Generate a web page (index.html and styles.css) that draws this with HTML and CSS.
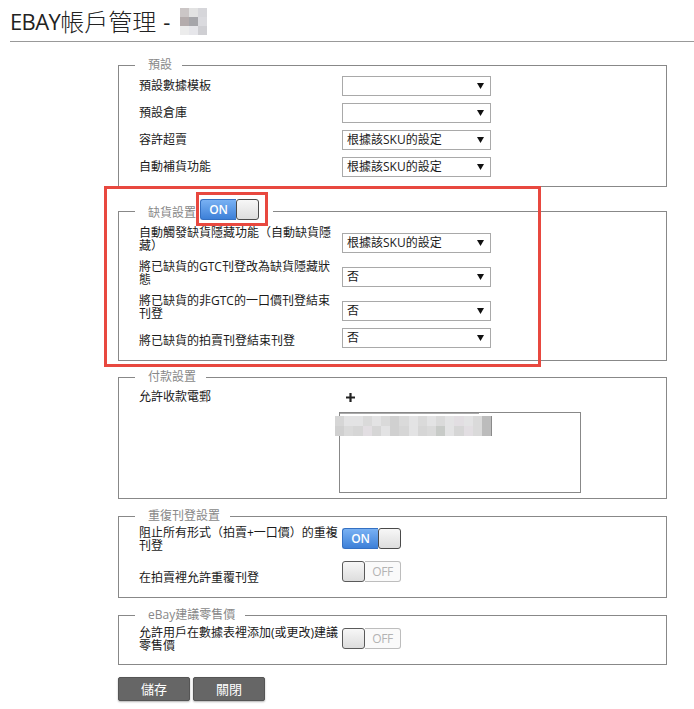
FILE: index.html
```html
<!DOCTYPE html>
<html lang="zh-Hant">
<head>
<meta charset="utf-8">
<title>EBAY帳戶管理</title>
<link rel="stylesheet" href="styles.css">
</head>
<body>
<div class="page">
  <h1 class="title"><span class="t-en">EBAY</span><span class="t-zh">帳戶管理</span><span class="t-dash">-</span><span class="blur-sq"><i class="b1"></i><i class="b2"></i><i class="b3"></i><i class="b4"></i><i class="b5"></i><i class="b6"></i><i class="b7"></i><i class="b8"></i><i class="b9"></i></span></h1>

  <div class="form">
    <fieldset class="fs fs1">
      <legend>預設</legend>
      <div class="rows">
        <div class="row"><span class="label">預設數據模板</span><div class="select"><span class="val"></span><svg class="arrow" width="7" height="6" viewBox="0 0 7 6"><path d="M0 0H7L3.5 6Z"/></svg></div></div>
        <div class="row"><span class="label">預設倉庫</span><div class="select"><span class="val"></span><svg class="arrow" width="7" height="6" viewBox="0 0 7 6"><path d="M0 0H7L3.5 6Z"/></svg></div></div>
        <div class="row"><span class="label">容許超賣</span><div class="select"><span class="val">根據該SKU的設定</span><svg class="arrow" width="7" height="6" viewBox="0 0 7 6"><path d="M0 0H7L3.5 6Z"/></svg></div></div>
        <div class="row"><span class="label">自動補貨功能</span><div class="select"><span class="val">根據該SKU的設定</span><svg class="arrow" width="7" height="6" viewBox="0 0 7 6"><path d="M0 0H7L3.5 6Z"/></svg></div></div>
      </div>
    </fieldset>

    <fieldset class="fs fs2">
      <legend><span class="lg-flex"><span class="lg-text">缺貨設置</span><span class="hl-wrap"><span class="toggle on"><span class="on-part">ON</span><span class="knob"></span></span><span class="hl"></span></span></span></legend>
      <div class="rows">
        <div class="row"><span class="label">自動觸發缺貨隱藏功能（自動缺貨隱藏）</span><div class="select"><span class="val">根據該SKU的設定</span><svg class="arrow" width="7" height="6" viewBox="0 0 7 6"><path d="M0 0H7L3.5 6Z"/></svg></div></div>
        <div class="row"><span class="label">將已缺貨的GTC刊登改為缺貨隱藏狀態</span><div class="select"><span class="val">否</span><svg class="arrow" width="7" height="6" viewBox="0 0 7 6"><path d="M0 0H7L3.5 6Z"/></svg></div></div>
        <div class="row"><span class="label">將已缺貨的非GTC的一口價刊登結束刊登</span><div class="select"><span class="val">否</span><svg class="arrow" width="7" height="6" viewBox="0 0 7 6"><path d="M0 0H7L3.5 6Z"/></svg></div></div>
        <div class="row"><span class="label">將已缺貨的拍賣刊登結束刊登</span><div class="select"><span class="val">否</span><svg class="arrow" width="7" height="6" viewBox="0 0 7 6"><path d="M0 0H7L3.5 6Z"/></svg></div></div>
      </div>
    </fieldset>

    <fieldset class="fs fs3">
      <legend>付款設置</legend>
      <div class="pay">
        <span class="label">允許收款電郵</span>
        <div class="pay-right">
          <div class="plus"><svg width="9" height="9" viewBox="0 0 9 9"><path d="M4.5 0V9M0 4.5H9" stroke="#222" stroke-width="2.2"/></svg></div>
          <div class="mailbox">
            <div class="email-frame">
              <div class="email-px">
                <i class="p1"></i><i class="p2"></i><i class="p2"></i><i class="p3"></i><i class="p2"></i><i class="p3"></i><i class="p4"></i><i class="p3"></i><i class="p2"></i><i class="p3"></i><i class="p2"></i><i class="p3"></i><i class="p2"></i><i class="p5"></i><i class="p2"></i><i class="p3"></i><i class="p6"></i>
                <i class="p4"></i><i class="p3"></i><i class="p1"></i><i class="p5"></i><i class="p1"></i><i class="p2"></i><i class="p4"></i><i class="p1"></i><i class="p2"></i><i class="p1"></i><i class="p3"></i><i class="p7"></i><i class="p2"></i><i class="p1"></i><i class="p5"></i><i class="p3"></i><i class="p6"></i>
              </div>
            </div>
          </div>
        </div>
      </div>
    </fieldset>

    <fieldset class="fs fs4">
      <legend>重復刊登設置</legend>
      <div class="rows">
        <div class="row r-on"><span class="label">阻止所有形式（拍賣+一口價）的重複刊登</span><span class="toggle on"><span class="on-part">ON</span><span class="knob"></span></span></div>
        <div class="row r-off"><span class="label">在拍賣裡允許重覆刊登</span><span class="toggle off"><span class="knob"></span><span class="off-part">OFF</span></span></div>
      </div>
    </fieldset>

    <fieldset class="fs fs5">
      <legend>eBay建議零售價</legend>
      <div class="rows">
        <div class="row r-on"><span class="label">允許用戶在數據表裡添加(或更改)建議零售價</span><span class="toggle off"><span class="knob"></span><span class="off-part">OFF</span></span></div>
      </div>
    </fieldset>

    <div class="actions">
      <button class="btn" type="button">儲存</button>
      <button class="btn" type="button">關閉</button>
    </div>
  </div>

  <div class="annot-big"></div>
</div>
</body>
</html>
```

FILE: styles.css
```css
* { box-sizing: border-box; }
html, body { margin: 0; background: #fff; }
body {
  font-family: "Open Sans", "Noto Sans CJK TC", sans-serif;
  font-size: 12px;
  color: #1a1a1a;
}
.page { position: relative; width: 694px; min-height: 709px; overflow: hidden; }

/* title */
.title {
  margin: 0 0 0 10px;
  height: 42px;
  padding-top: 6px;
  font-size: 22px;
  line-height: 30px;
  font-weight: 400;
  color: #222;
  border-bottom: 1px solid #999;
  white-space: nowrap;
  display: flex;
  align-items: flex-start;
}
.t-en { letter-spacing: -0.6px; }
.t-zh { font-family: "Noto Sans CJK TC", sans-serif; font-weight: 300; font-size: 24px; line-height: 30px; }
.t-dash { margin-left: 7px; }
.blur-sq {
  display: grid;
  grid-template-columns: repeat(3, 9px);
  grid-template-rows: repeat(3, 9px);
  margin-left: 10px;
  margin-top: 2px;
}
.blur-sq i { display: block; }
.b1 { background: #cbc6c6; } .b2 { background: #e2e2e2; } .b3 { background: #d6d6da; }
.b4 { background: #b4acac; } .b5 { background: #a6a6aa; } .b6 { background: #dadade; }
.b7 { background: #ececec; } .b8 { background: #e6e6ea; } .b9 { background: #cfcfd3; }

/* form */
.form { margin-left: 118px; width: 549px; }
.fs {
  margin: 0;
  border: 1px solid #888;
  padding: 0 0 0 20px;
  min-width: 0;
}
.fs legend {
  margin-left: -4px;
  padding: 0 10px 0 13px;
  font-size: 12px;
  line-height: 16px;
  color: #888;
}
.rows { display: flex; flex-direction: column; gap: 7px; }
.row { display: flex; align-items: center; }
.label { width: 201px; margin-right: 2px; line-height: 16px; flex: none; }

.select {
  width: 149px;
  height: 20px;
  flex: none;
  border: 1px solid #a9a9a9;
  background: #fff;
  display: flex;
  align-items: center;
  justify-content: space-between;
  padding: 0 6px 0 4px;
  line-height: 18px;
}
.arrow { fill: #111; flex: none; }

.fs1 { margin-top: 15px; padding-top: 3px; padding-bottom: 9px; }

.fs2 { margin-top: 12px; padding-top: 3px; padding-bottom: 12px; }
.fs2 legend { padding-right: 14px; }
.lg-flex { display: flex; align-items: flex-start; padding-bottom: 2px; }
.lg-text { margin-top: 6px; line-height: 16px; }
.hl-wrap { position: relative; display: inline-flex; margin-left: 4px; }
.hl {
  position: absolute;
  left: -4px; top: -7px; right: -9px; bottom: -6px;
  border: 3px solid #e8483f;
}
.fs2 .row { align-items: flex-end; }
.fs2 .label { line-height: 13px; padding-bottom: 1px; }

.fs3 { margin-top: 8px; padding-top: 4px; padding-bottom: 5px; }
.pay { display: flex; align-items: flex-start; }
.pay-right { display: flex; flex-direction: column; }
.plus { height: 16px; display: flex; align-items: center; padding-left: 4px; }
.mailbox {
  margin-left: -3px;
  margin-top: 7px;
  width: 242px;
  height: 81px;
  border: 1px solid #888;
  background: #fff;
}
.email-frame {
  width: 139px;
  height: 23px;
  border-top: 1px solid #aaa;
  border-bottom: 1px solid #aaa;
  padding-top: 2px;
}
.email-px {
  margin-left: -5px;
  display: grid;
  grid-template-columns: repeat(16, 9.2px) 10px;
  grid-template-rows: 10px 10px;
  width: 157px;
}
.email-px i { display: block; }
.p1 { background: #d6d6d6; } .p2 { background: #e3e3e4; } .p3 { background: #dadada; }
.p4 { background: #d0d0d0; } .p5 { background: #e2dee2; } .p6 { background: #bcbcbc; border-right: 1px solid #8a8a8a; }
.p7 { background: #c8cbc8; }

.fs4 { margin-top: 9px; padding-top: 2px; padding-bottom: 13px; }
.fs4 .rows { gap: 9px; }
.fs4 .row, .fs5 .row { align-items: flex-start; }
.fs4 .label, .fs5 .label { line-height: 13px; }
.r-on .toggle { margin-top: 2px; }
.r-off .label { margin-top: 10px; }

.fs5 { margin-top: 9px; padding-top: 3px; padding-bottom: 12px; }

/* toggle */
.toggle {
  display: inline-flex;
  width: 59px;
  height: 21px;
  flex: none;
  font-size: 12px;
  line-height: 19px;
}
.on-part {
  width: 36px;
  background: linear-gradient(#79b1f3, #3d80d8);
  border: 1px solid #3470c2;
  border-right: none;
  border-radius: 3px 0 0 3px;
  color: #fff;
  text-align: center;
  font-weight: 600;
  letter-spacing: -0.2px;
}
.knob {
  width: 23px;
  background: linear-gradient(#f7f7f7, #dddddd);
  border: 1px solid #4a4a4a;
  border-radius: 3px;
}
.off-part {
  flex: 1;
  background: #fafafa;
  border: 1px solid #bdbdbd;
  border-left: none;
  border-radius: 0 3px 3px 0;
  color: #b3b3b3;
  text-align: center;
  letter-spacing: -0.4px;
}
.toggle.off .knob { border-color: #5a5a5a; }

/* buttons */
.actions { margin-top: 12px; display: flex; gap: 3px; }
.btn {
  width: 72px;
  height: 24px;
  margin: 0;
  padding: 0;
  background: #666;
  border: 1px solid #555;
  border-radius: 2px;
  color: #fff;
  font-family: "Open Sans", "Noto Sans CJK TC", sans-serif;
  font-size: 13px;
  line-height: 22px;
  box-shadow: 0 1px 2px rgba(0, 0, 0, 0.3);
}

/* annotation */
.annot-big {
  position: absolute;
  left: 104px;
  top: 186px;
  width: 437px;
  height: 181px;
  border: 3px solid #e8483f;
  pointer-events: none;
}
```
